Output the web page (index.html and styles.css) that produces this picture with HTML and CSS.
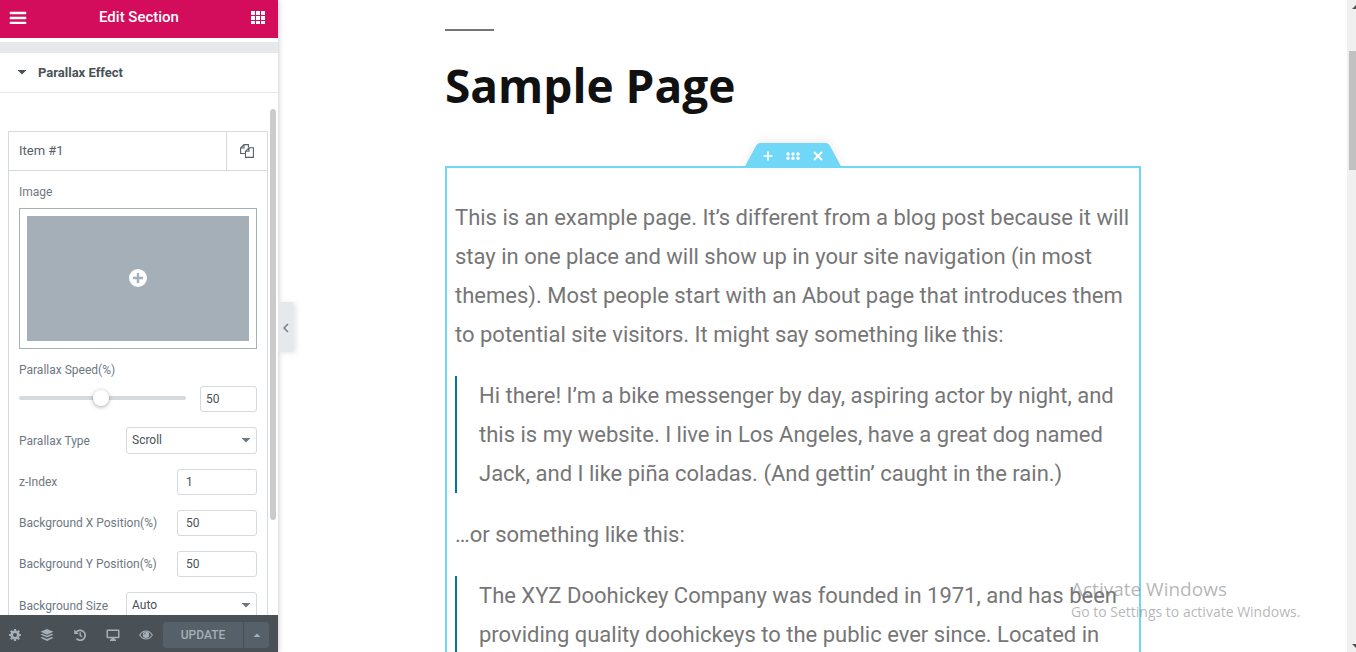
FILE: index.html
```html
<!DOCTYPE html>
<html lang="en">
<head>
<meta charset="utf-8">
<title>Edit Section</title>
<link rel="stylesheet" href="styles.css">
</head>
<body>
<div class="editor">
  <aside class="panel">
    <header class="panel-header">
      <button class="icon-button" aria-label="Menu"><svg width="18" height="13" viewBox="0 0 18 13" fill="currentColor"><path d="M1 1h16v2H1zM1 6h16v2H1zM1 11h16v2H1z" stroke="currentColor" stroke-width=".5"/></svg></button>
      <h1 class="panel-title">Edit Section</h1>
      <button class="icon-button" aria-label="Widgets"><svg width="14" height="14" viewBox="0 0 14 14" fill="currentColor"><path d="M0 0h4v4H0zM5 0h4v4H5zM10 0h4v4h-4zM0 5h4v4H0zM5 5h4v4H5zM10 5h4v4h-4zM0 10h4v3H0zM5 10h4v3H5zM10 10h4v3h-4z"/></svg></button>
    </header>
    <div class="panel-content">
      <div class="section-band"></div>
      <button class="section-toggle"><svg width="8" height="5" viewBox="0 0 8 5" fill="currentColor"><path d="M0 0h8v.6L4 4.600 0 .6z"/></svg>Parallax Effect</button>
      <div class="repeater">
        <div class="repeater-head">
          <button class="repeater-title">Item #1</button>
          <button class="repeater-copy" aria-label="Duplicate"><svg width="14" height="14" viewBox="0 0 14 14" fill="none" stroke="currentColor" stroke-width="1.1"><path d="M5.500 9.500H.6V4L4 .6h4.400v2.700M4 .6V4H.6M5.500 7.300L9 3.700h4.400v9.700H5.500zM9 3.700v3.600H5.500"/></svg></button>
        </div>
        <div class="controls">
          <span class="label">Image</span>
          <button class="media" aria-label="Choose image"><span class="media-area"><svg width="18" height="18" viewBox="0 0 18 18"><circle cx="9" cy="9" r="9" fill="#fff"/><path d="M9 4v10M4 9h10" stroke="#a4afb7" stroke-width="2.400"/></svg></span></button>
          <label class="label speed-label" for="speed">Parallax Speed(%)</label>
          <div class="slider-row">
            <input class="slider" type="range" min="0" max="100" value="49" aria-label="Parallax Speed slider">
            <input class="field field-small" id="speed" type="text" value="50">
          </div>
          <div class="row"><label class="label" for="type">Parallax Type</label>
            <span class="select-wrap"><select class="field" id="type"><option>Scroll</option></select><svg class="caret" width="8" height="5" viewBox="0 0 8 5" fill="currentColor"><path d="M0 0h8v.6L4 4.600 0 .6z"/></svg></span></div>
          <div class="row"><label class="label" for="z">z-Index</label><input class="field field-number" id="z" type="text" value="1"></div>
          <div class="row"><label class="label" for="bx">Background X Position(%)</label><input class="field field-number" id="bx" type="text" value="50"></div>
          <div class="row"><label class="label" for="by">Background Y Position(%)</label><input class="field field-number" id="by" type="text" value="50"></div>
          <div class="row"><label class="label" for="size">Background Size</label>
            <span class="select-wrap"><select class="field" id="size"><option>Auto</option></select><svg class="caret" width="8" height="5" viewBox="0 0 8 5" fill="currentColor"><path d="M0 0h8v.6L4 4.600 0 .6z"/></svg></span></div>
        </div>
      </div>
      <div class="panel-thumb"></div>
    </div>
    <footer class="panel-footer">
      <div class="tools">
        <button class="tool" aria-label="Settings"><svg width="12" height="12" viewBox="0 0 12 12"><circle cx="6" cy="6" r="3.300" fill="none" stroke="currentColor" stroke-width="2.600"/><path d="M6 0v2M6 10v2M0 6h2M10 6h2M1.800 1.800l1.400 1.400M8.800 8.800l1.400 1.400M10.200 1.800L8.800 3.200M3.200 8.800l-1.400 1.400" stroke="currentColor" stroke-width="2.200"/></svg></button>
        <button class="tool" aria-label="Navigator"><svg width="14" height="12" viewBox="0 0 14 12" fill="currentColor"><path d="M7 0l6.500 2.800L7 5.700.5 2.800zM2.300 4.700L7 6.800l4.700-2.100 1.800.9L7 8.600.5 5.600zM2.300 7.900L7 10l4.700-2.100 1.800.9L7 11.900.5 8.800z"/></svg></button>
        <button class="tool" aria-label="History"><svg width="12" height="12" viewBox="0 0 12 12" fill="none" stroke="currentColor" stroke-width="1.700"><path d="M2 3.500A5 5 0 1 1 2.500 9.700"/><path d="M6.200 3.300v3.200l1.900 1.200" stroke-width="1.400"/><path d="M.2.500v4.600h4.600z" fill="currentColor" stroke="none"/></svg></button>
        <button class="tool" aria-label="Responsive mode"><svg width="14" height="12" viewBox="0 0 14 12" fill="currentColor"><path fill-rule="evenodd" d="M1.500.5h11q1 0 1 1v6.800q0 1-1 1H8.600l.4 1.300h1V12H4v-1.400h1l.4-1.300H1.500q-1 0-1-1V1.500q0-1 1-1zM2 2v5.700h10V2z"/></svg></button>
        <button class="tool" aria-label="Preview"><svg width="14" height="10" viewBox="0 0 14 10"><path d="M.7 5Q3.200 1 7 1t6.300 4Q10.800 9 7 9T.7 5z" fill="none" stroke="currentColor" stroke-width="1.200"/><circle cx="7" cy="4.700" r="3.200" fill="currentColor"/><path d="M5.200 4.600Q5.200 3 6.900 2.900" fill="none" stroke="#495157" stroke-width=".8"/></svg></button>
      </div>
      <button class="update">UPDATE</button>
      <button class="update-more" aria-label="Save options"><svg width="6" height="4" viewBox="0 0 6 4" fill="currentColor"><path d="M0 4v-.6L3 .4l3 3V4z"/></svg></button>
    </footer>
    <button class="collapse" aria-label="Hide panel"><svg width="6" height="10" viewBox="0 0 6 10" fill="none" stroke="currentColor" stroke-width="1.400"><path d="M5 1L1 5l4 4"/></svg></button>
  </aside>
  <main class="preview">
    <article class="entry">
      <h2 class="entry-title">Sample Page</h2>
      <section class="section">
        <div class="handles">
          <svg class="handles-shape" width="98" height="25" viewBox="0 0 98 25"><path d="M0 25L12 3Q13.500 0 16.500 0h65q3 0 4.500 3L98 25z" fill="#71d7f7"/></svg>
          <button class="handle" aria-label="Add"><svg width="10" height="10" viewBox="0 0 10 10"><path d="M5 .5v9M.5 5h9" stroke="#fff" stroke-width="1.600"/></svg></button>
          <button class="handle" aria-label="Edit"><svg width="14" height="8" viewBox="0 0 14 8" fill="#fff"><circle cx="2" cy="2" r="1.700"/><circle cx="7" cy="2" r="1.700"/><circle cx="12" cy="2" r="1.700"/><circle cx="2" cy="6.300" r="1.700"/><circle cx="7" cy="6.300" r="1.700"/><circle cx="12" cy="6.300" r="1.700"/></svg></button>
          <button class="handle" aria-label="Delete"><svg width="10" height="10" viewBox="0 0 10 10"><path d="M1 1l8 8M9 1L1 9" stroke="#fff" stroke-width="1.900"/></svg></button>
        </div>
        <p>This is an example page. It’s different from a blog post because it will stay in one place and will show up in your site navigation (in most themes). Most people start with an About page that introduces them to potential site visitors. It might say something like this:</p>
        <blockquote>Hi there! I’m a bike messenger by day, aspiring actor by night, and this is my website. I live in Los Angeles, have a great dog named Jack, and I like piña coladas. (And gettin’ caught in the rain.)</blockquote>
        <p>…or something like this:</p>
        <blockquote>The XYZ Doohickey Company was founded in 1971, and has been providing quality doohickeys to the public ever since. Located in</blockquote>
      </section>
    </article>
  </main>
  <div class="page-scroll">
    <svg class="arrow" width="10" height="5" viewBox="0 0 10 5" fill="#505050"><path d="M0 5h10L5 0z"/></svg>
    <div class="page-thumb"></div>
    <svg class="arrow arrow-down" width="10" height="5" viewBox="0 0 10 5" fill="#505050"><path d="M0 0h10L5 5z"/></svg>
  </div>
  <div class="watermark"><div class="watermark-title">Activate Windows</div><div class="watermark-text">Go to Settings to activate Windows.</div></div>
</div>
</body>
</html>
```
FILE: styles.css
```css
* { box-sizing: border-box; }
body { margin: 0; font-family: Roboto, "Liberation Sans", sans-serif; background: #fff; }
button { margin: 0; padding: 0; border: 0; background: none; font: inherit; color: inherit; }
svg { display: block; }

.editor { position: relative; display: flex; height: 100vh; overflow: hidden; }

.panel { position: relative; z-index: 1; flex: none; width: 278px; display: flex; flex-direction: column; background: #fff; box-shadow: 0 0 6px rgba(0, 0, 0, .25); }
.panel-header { flex: none; height: 38px; padding: 0 13px 4px 9px; display: flex; align-items: center; justify-content: space-between; background: #d30c5c; color: #fff; }
.icon-button svg { margin-top: 1px; }
.panel-title { margin: 0; font-size: 15px; line-height: 20px; font-weight: 500; }
.panel-content { position: relative; flex: 1; min-height: 0; padding-top: 4px; overflow: hidden; }
.section-band { height: 11px; background: #e6e9ec; }
.section-toggle { width: 100%; height: 40px; padding: 0 18px; display: flex; align-items: center; gap: 12px; border-bottom: 1px solid #e6e9ec; font-size: 13px; font-weight: 700; color: #495157; }
.panel-thumb { position: absolute; top: 71px; right: 2px; width: 6px; height: 411px; border-radius: 3px; background: #cbcbcb; }

.repeater { margin: 38px 10px 0 8px; border: 1px solid #d5dadf; }
.repeater-head { display: flex; height: 39px; border-bottom: 1px solid #d5dadf; color: #556068; }
.repeater-title { flex: 1; padding: 0 0 2px 10px; text-align: left; font-size: 13px; }
.repeater-copy { width: 41px; display: flex; align-items: center; justify-content: center; border-left: 1px solid #d5dadf; }
.controls { padding: 13px 10px; display: flex; flex-direction: column; }
.label { font-size: 12px; line-height: 16px; color: #6d7882; }
.media { margin-top: 8px; height: 141px; padding: 7px; display: flex; border: 1px solid #a4afb7; }
.media-area { flex: 1; align-self: stretch; padding-bottom: 1px; display: flex; align-items: center; justify-content: center; background: #a4afb7; }
.speed-label { margin-top: 13px; }
.slider-row { display: flex; align-items: center; gap: 14px; margin: 8px 0 15px; }
.slider { flex: 1; min-width: 0; height: 18px; margin: 0 0 2px; appearance: none; background: none; }
.slider::-webkit-slider-runnable-track { height: 4px; border-radius: 2px; background: #d5dadf; }
.slider::-webkit-slider-thumb { appearance: none; width: 16px; height: 16px; margin-top: -6px; border-radius: 50%; background: #fff; box-shadow: 0 1px 4px rgba(0, 0, 0, .35); }
.field { height: 26px; padding: 0 5px; border: 1px solid #d5dadf; border-radius: 3px; background: #fff; font-family: inherit; font-size: 12px; color: #495157; }
.field-small { width: 57px; }
.field-number { width: 80px; padding: 0 8px; }
.row { display: flex; align-items: center; justify-content: space-between; margin-bottom: 15px; }
.select-wrap { position: relative; width: 131px; }
.select-wrap .field { display: block; width: 100%; height: 27px; padding-bottom: 2px; appearance: none; }
.caret { position: absolute; right: 7px; top: 11px; color: #6d7882; }

.panel-footer { flex: none; height: 37px; padding: 2px 9px 0 0; display: flex; align-items: center; background: #495157; color: #a4afb7; }
.tools { flex: 1; display: flex; }
.tool { width: 33px; height: 35px; display: flex; align-items: center; justify-content: center; }
.tools .tool:first-child { width: 30px; }
.update { width: 80px; height: 26px; border-radius: 3px 0 0 3px; background: #556068; font-size: 12px; font-weight: 500; }
.update-more { width: 25px; height: 26px; margin-left: 1px; display: flex; align-items: center; justify-content: center; border-radius: 0 3px 3px 0; background: #556068; }
.collapse { position: absolute; left: 100%; top: 302px; width: 15px; height: 50px; padding: 2px 0 0 5px; background: #e6e9ec; color: #6d7882; box-shadow: 3px 1px 5px rgba(0, 0, 0, .1); }

.preview { flex: 1; min-width: 0; padding: 29px 206px 0 167px; }
.entry-title { margin: 0 0 52px; font-family: "Open Sans", "Noto Sans", sans-serif; font-size: 46px; line-height: 58px; font-weight: 700; color: #111; }
.entry-title::before { content: ""; display: block; width: 49px; height: 2px; margin-bottom: 25px; background: #767676; }
.section { position: relative; padding: 30px 8px 0; border: 2px solid #71d7f7; color: #767676; font-size: 22px; line-height: 39px; height: 700px; }
.section p { margin: 0 0 22px; }
.section blockquote { margin: 0 0 22px; padding-left: 22px; border-left: 2px solid #0073aa; }
.handles { position: absolute; left: 50%; bottom: 100%; width: 98px; height: 25px; margin-left: -49px; padding: 0 11px; display: flex; filter: drop-shadow(0 -2px 4px rgba(0, 0, 0, .08)); }
.handles-shape { position: absolute; left: 0; top: 0; }
.handle { position: relative; flex: 1; display: flex; align-items: center; justify-content: center; }

.page-scroll { flex: none; width: 9px; padding: 4px 0 0 2px; display: flex; flex-direction: column; background: #f0f0f0; overflow: hidden; }
.page-thumb { width: 100%; height: 119px; margin-top: 42px; background: #c1c1c1; }
.arrow { flex: none; margin-left: 3px; }
.arrow-down { margin-top: auto; margin-bottom: 3px; }
.watermark { position: absolute; left: 1071px; bottom: 30px; font-family: "Open Sans", "Noto Sans", sans-serif; color: rgba(120, 120, 120, .55); }
.watermark-title { font-size: 19px; line-height: 26px; }
.watermark-text { font-size: 14px; line-height: 20px; }
```
